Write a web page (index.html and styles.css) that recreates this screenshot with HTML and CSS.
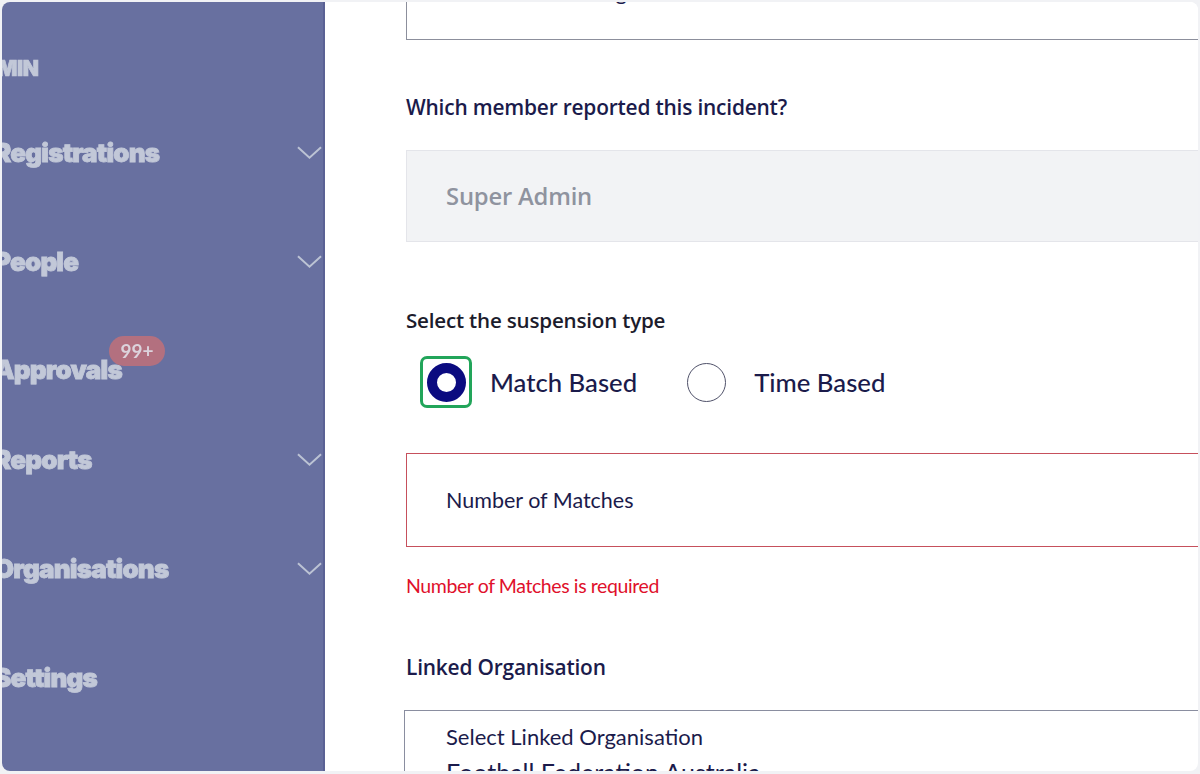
FILE: index.html
```html
<!DOCTYPE html>
<html lang="en">
<head>
<meta charset="utf-8">
<title>Suspension</title>
<link rel="stylesheet" href="styles.css">
</head>
<body>
<div class="frame">
  <aside class="sidebar">
    <div class="nav-heading">ADMIN</div>
    <nav class="nav">
      <div class="nav-item"><span class="nav-text">Registrations</span><svg class="chev" viewBox="0 0 26 14"><polyline points="1,1 13,12 25,1"/></svg></div>
      <div class="nav-item"><span class="nav-text">People</span><svg class="chev" viewBox="0 0 26 14"><polyline points="1,1 13,12 25,1"/></svg></div>
      <div class="nav-item approvals"><span class="nav-text">Approvals</span><span class="badge">99+</span></div>
      <div class="nav-item"><span class="nav-text">Reports</span><svg class="chev" viewBox="0 0 26 14"><polyline points="1,1 13,12 25,1"/></svg></div>
      <div class="nav-item"><span class="nav-text">Organisations</span><svg class="chev" viewBox="0 0 26 14"><polyline points="1,1 13,12 25,1"/></svg></div>
      <div class="nav-item"><span class="nav-text">Settings</span></div>
    </nav>
  </aside>
  <main class="main">
    <div class="form">
      <div class="input input-top"><span class="input-text">Incident challenge - Red card</span></div>

      <div class="label label-q">Which member reported this incident?</div>
      <div class="input input-disabled"><span class="disabled-text">Super Admin</span></div>

      <div class="label label-type">Select the suspension type</div>
      <div class="radio-row">
        <div class="radio-option">
          <span class="focus-ring"><span class="radio radio-checked"></span></span>
          <span class="radio-label">Match Based</span>
        </div>
        <div class="radio-option">
          <span class="focus-spacer"><span class="radio"></span></span>
          <span class="radio-label">Time Based</span>
        </div>
      </div>

      <div class="input input-error"><span class="input-text-sm">Number of Matches</span></div>
      <div class="error-msg">Number of Matches is required</div>

      <div class="label label-linked">Linked Organisation</div>
      <div class="select">
        <div class="select-placeholder">Select Linked Organisation</div>
        <div class="select-value">Football Federation Australia</div>
      </div>
    </div>
  </main>
</div>
</body>
</html>
```

FILE: styles.css
```css
* { box-sizing: border-box; }

html, body {
  margin: 0;
  padding: 0;
  background: #f1f2f5;
  width: 1200px;
  height: 774px;
  overflow: hidden;
}

.frame {
  margin: 2px 2px 0 2px;
  width: 1196px;
  height: 769px;
  border-radius: 8px;
  overflow: hidden;
  background: #ffffff;
  display: flex;
}

/* Sidebar (dimmed overlay look) */
.sidebar {
  width: 323px;
  flex: 0 0 323px;
  background: #6870a0;
  border-right: 2px solid #5a6194;
  overflow: hidden;
  position: relative;
  color: #c2c8d8;
  font-family: "Inter", "DejaVu Sans", sans-serif;
  font-weight: 900;
  filter: blur(0.5px);
}

.nav-heading {
  margin-top: 53px;
  margin-left: -36px;
  font-size: 21px;
  line-height: 28px;
  letter-spacing: -0.3px;
  -webkit-text-stroke: 0.7px #c2c8d8;
}

.nav {
  margin-top: 55px;
  display: flex;
  flex-direction: column;
}

.nav-item {
  position: relative;
  height: 30px;
  display: flex;
  align-items: center;
  justify-content: space-between;
  padding-right: 1px;
}

.nav-item + .nav-item { margin-top: 79px; }

.nav-item.approvals { margin-top: 78px; margin-bottom: -19px; }

.nav-text {
  margin-left: -8px;
  font-size: 26px;
  letter-spacing: -0.8px;
  line-height: 30px;
  -webkit-text-stroke: 0.8px #c2c8d8;
}

.chev {
  width: 25px;
  height: 14px;
  fill: none;
  stroke: #bcc3d4;
  stroke-width: 2;
}

.badge {
  position: absolute;
  left: 107px;
  top: -19px;
  width: 56px;
  height: 30px;
  border-radius: 15px;
  background: #b3707f;
  color: #dcd3dc;
  font-family: "Lato", sans-serif;
  font-weight: 700;
  font-size: 19px;
  line-height: 30px;
  text-align: center;
  -webkit-text-stroke: 0;
}

/* Main content */
.main {
  flex: 1;
  overflow: hidden;
  font-family: "Lato", "Liberation Sans", sans-serif;
  color: #1b1b4b;
}

.form {
  margin-left: 81px;
  width: 900px;
}

.input {
  border: 1px solid #8a8ea0;
  background: #fff;
  display: flex;
  align-items: center;
  padding-left: 39px;
}

.input-top {
  height: 90px;
  margin-top: -52px;
  border-color: #8c8f9c;
}

.input-text {
  font-size: 22px;
  color: #1b1b4b;
  margin-top: -8px;
  padding-left: 18px;
}

.label {
  font-family: "Open Sans", "Lato", sans-serif;
  font-size: 20.9px;
  line-height: 24px;
  font-weight: 600;
  color: #1b1b4b;
  letter-spacing: -0.2px;
}

.label-q { margin-top: 55px; }

.input-disabled {
  margin-top: 31px;
  height: 92px;
  background: #f2f3f5;
  border: 1px solid #e4e5ea;
}

.disabled-text {
  font-family: "Open Sans", "Lato", sans-serif;
  font-size: 23.8px;
  font-weight: 600;
  color: #8f939f;
  letter-spacing: -0.2px;
}

.label-type {
  margin-top: 66px;
  color: #1c1c2c;
  font-size: 20.6px;
}

.radio-row {
  margin-top: 24px;
  margin-left: 14px;
  display: flex;
  align-items: center;
  gap: 50px;
}

.radio-option {
  display: flex;
  align-items: center;
  gap: 18px;
}

.focus-ring,
.focus-spacer {
  width: 52px;
  height: 52px;
  border-radius: 7px;
  display: flex;
  align-items: center;
  justify-content: center;
}

.focus-ring { border: 3px solid #22a55a; }

.focus-spacer { width: 39px; margin-right: 10px; }

.radio {
  width: 39px;
  height: 39px;
  border-radius: 50%;
  border: 1px solid #50526a;
  background: #fff;
  flex: 0 0 39px;
}

.radio-checked {
  border: 10px solid #0b0b80;
}

.radio-label {
  font-size: 25.7px;
  color: #1b1b4b;
  font-weight: 500;
}

.input-error {
  margin-top: 45px;
  height: 94px;
  border-color: #c6505c;
}

.input-text-sm {
  font-size: 21.5px;
  color: #1b1b4b;
}

.error-msg {
  margin-top: 28px;
  font-size: 19.5px;
  line-height: 22px;
  color: #e0102b;
  letter-spacing: -0.4px;
}

.label-linked { margin-top: 58px; }

.select {
  margin-top: 31px;
  margin-left: -2px;
  border: 1px solid #8a8ea0;
  height: 120px;
  padding-top: 14px;
  padding-left: 41px;
}

.select-placeholder {
  font-size: 22px;
  line-height: 24px;
  color: #1b1b4b;
}

.select-value {
  margin-top: 8px;
  font-size: 25px;
  line-height: 30px;
  color: #1b1b4b;
}
```
